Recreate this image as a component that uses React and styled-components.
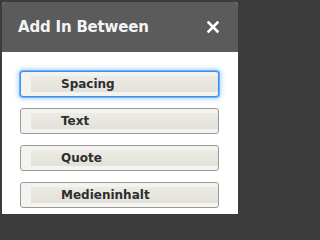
import React from "react";
import styled, { createGlobalStyle } from "styled-components";

const GlobalStyle = createGlobalStyle`
  html, body {
    margin: 0;
    background: #3c3c3c;
  }
  body {
    font-family: "DejaVu Sans", Verdana, sans-serif;
  }
`;

const Backdrop = styled.div`
  padding: 2px 0 0 2px;
  height: 214px;
  box-sizing: border-box;
  overflow: hidden;
`;

const Dialog = styled.div`
  width: 236px;
  height: 220px;
  background: #ffffff;
  border-radius: 4px 4px 0 0;
  overflow: hidden;
`;

const Header = styled.div`
  height: 50px;
  background: #5b5b5b;
  display: flex;
  align-items: center;
  justify-content: space-between;
  padding: 0 19px 0 16px;
`;

const Title = styled.h1`
  margin: 0;
  font-size: 15px;
  font-weight: bold;
  letter-spacing: -0.2px;
  color: #f4f4f4;
`;

const Close = styled.button`
  border: 0;
  padding: 0;
  background: none;
  width: 12px;
  height: 12px;
  display: flex;
  cursor: pointer;
`;

const List = styled.div`
  display: flex;
  flex-direction: column;
  gap: 11px;
  padding: 19px 0 0 18px;
`;

const Option = styled.button`
  width: 199px;
  height: 26px;
  box-sizing: border-box;
  border: 1px solid ${(p) => (p.focused ? "#3b8ff0" : "#9a9a98")};
  border-radius: 3px;
  padding: 0 0 0 40px;
  text-align: left;
  font-family: "DejaVu Sans", Verdana, sans-serif;
  font-size: 12px;
  font-weight: bold;
  color: #2e2e2e;
  background:
    linear-gradient(#ecebe5, #e2e1d9) no-repeat 10px 4px / calc(100% - 10px) 16px,
    #f4f3ef;
  box-shadow: ${(p) =>
    p.focused
      ? "0 0 0 1px #6db0f7, 0 0 5px 2px rgba(100, 175, 255, 0.55)"
      : "none"};
  outline: none;
`;

const items = ["Spacing", "Text", "Quote", "Medieninhalt"];

export default function App() {
  return (
    <>
      <GlobalStyle />
      <Backdrop>
        <Dialog>
          <Header>
            <Title>Add In Between</Title>
            <Close aria-label="Close">
              <svg width="12" height="12" viewBox="0 0 12 12">
                <path
                  d="M1.5 1.5 L10.5 10.5 M10.5 1.5 L1.5 10.5"
                  stroke="#ffffff"
                  strokeWidth="2.6"
                  strokeLinecap="square"
                />
              </svg>
            </Close>
          </Header>
          <List>
            {items.map((label, i) => (
              <Option key={label} focused={i === 0}>
                {label}
              </Option>
            ))}
          </List>
        </Dialog>
      </Backdrop>
    </>
  );
}
